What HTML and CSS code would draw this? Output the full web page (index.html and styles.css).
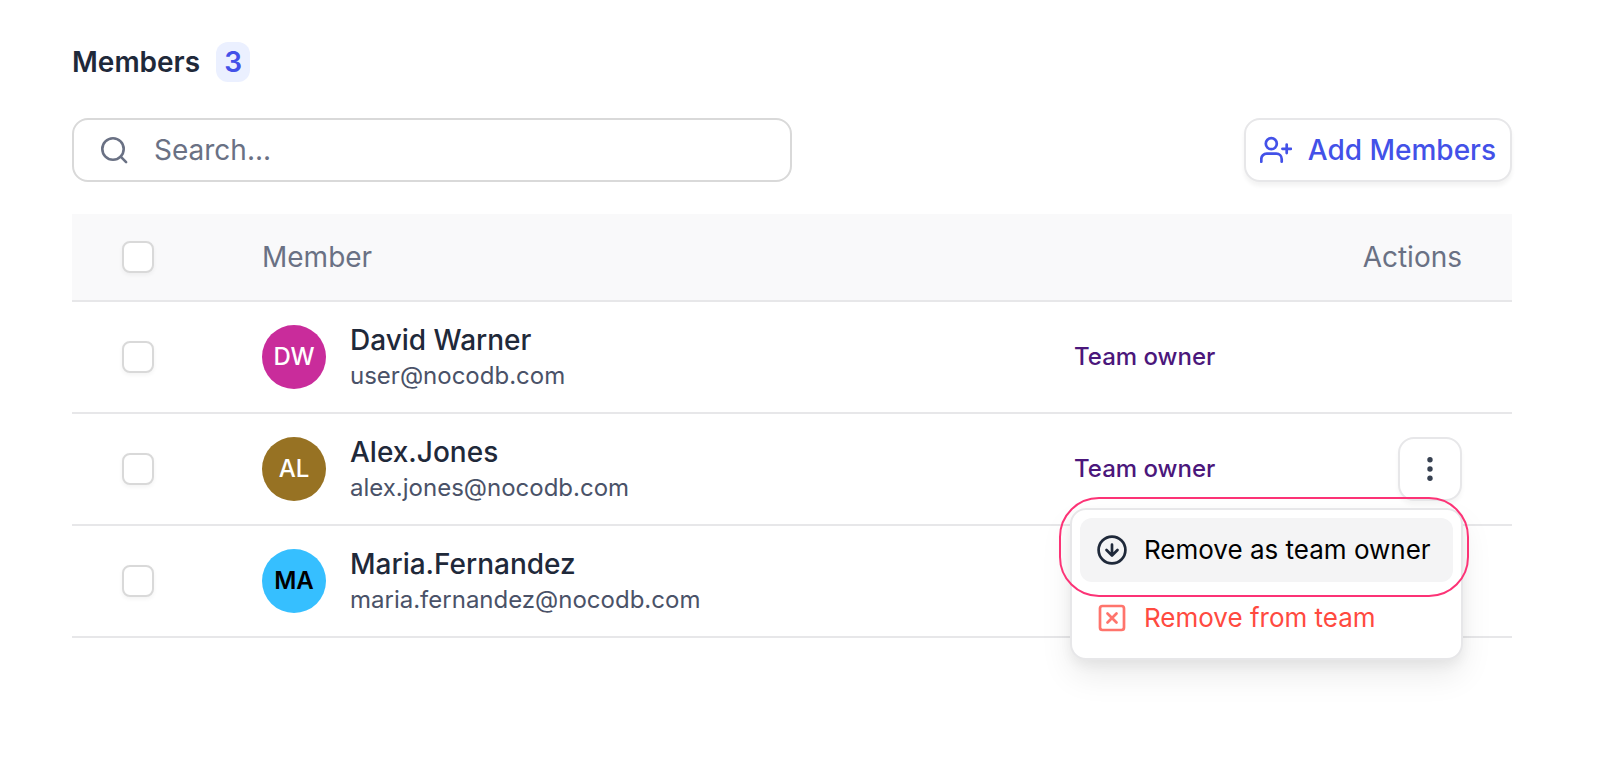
FILE: index.html
```html
<!DOCTYPE html>
<html lang="en">
<head>
<meta charset="utf-8">
<title>Members</title>
<link rel="stylesheet" href="styles.css">
</head>
<body>
<main class="page">
  <header class="heading">
    <h1 class="title">Members</h1>
    <span class="count">3</span>
  </header>

  <div class="toolbar">
    <label class="search">
      <svg class="search-icon" viewBox="0 0 32 32" aria-hidden="true"><circle cx="15" cy="15" r="10.700"/><path d="M22.700 22.700l5.400 5.400"/></svg>
      <input class="search-input" type="text" placeholder="Search..." aria-label="Search members">
    </label>
    <button class="add-button" type="button">
      <svg class="add-icon" viewBox="0 0 32 32" aria-hidden="true"><circle cx="11.300" cy="9.700" r="5.500"/><path d="M1.300 27.700v-2.700a5.400 5.400 0 0 1 5.400-5.400h9.600a5.400 5.400 0 0 1 5.400 5.400v2.700M26.700 10.500v8.600M22.400 14.800h8.600"/></svg>
      Add Members
    </button>
  </div>

  <table class="members">
    <thead>
      <tr>
        <th class="col-check"><input class="check" type="checkbox" aria-label="Select all members"></th>
        <th class="col-member">Member</th>
        <th class="col-role"></th>
        <th class="col-actions">Actions</th>
      </tr>
    </thead>
    <tbody>
      <tr>
        <td class="col-check"><input class="check" type="checkbox" aria-label="Select David Warner"></td>
        <td>
          <div class="person">
            <span class="avatar avatar-magenta">DW</span>
            <div class="person-text"><span class="name">David Warner</span><span class="email">user@nocodb.com</span></div>
          </div>
        </td>
        <td class="role">Team owner</td>
        <td class="col-actions"></td>
      </tr>
      <tr>
        <td class="col-check"><input class="check" type="checkbox" aria-label="Select Alex.Jones"></td>
        <td>
          <div class="person">
            <span class="avatar avatar-brown">AL</span>
            <div class="person-text"><span class="name">Alex.Jones</span><span class="email">alex.jones@nocodb.com</span></div>
          </div>
        </td>
        <td class="role">Team owner</td>
        <td class="col-actions">
          <div class="action-wrap">
            <button class="more-button" type="button" aria-label="Actions for Alex.Jones">
              <svg class="more-icon" viewBox="0 0 32 32" aria-hidden="true"><circle cx="16" cy="6.700" r="2.700"/><circle cx="16" cy="16" r="2.700"/><circle cx="16" cy="25.300" r="2.700"/></svg>
            </button>
            <div class="menu">
              <button class="menu-item menu-item-active" type="button">
                <svg class="menu-icon" viewBox="0 0 32 32" aria-hidden="true"><circle cx="16" cy="16" r="13.400"/><path d="M16 10.700v10.600M10.500 16l5.500 5.500 5.500-5.500"/></svg>
                Remove as team owner
              </button>
              <button class="menu-item menu-item-danger" type="button">
                <svg class="menu-icon" viewBox="0 0 32 32" aria-hidden="true"><rect x="4" y="4" width="24" height="24" rx="2.500"/><path d="M11.500 11.500l9 9M20.500 11.500l-9 9"/></svg>
                Remove from team
              </button>
              <div class="highlight"></div>
            </div>
          </div>
        </td>
      </tr>
      <tr>
        <td class="col-check"><input class="check" type="checkbox" aria-label="Select Maria.Fernandez"></td>
        <td>
          <div class="person">
            <span class="avatar avatar-blue">MA</span>
            <div class="person-text"><span class="name">Maria.Fernandez</span><span class="email">maria.fernandez@nocodb.com</span></div>
          </div>
        </td>
        <td class="role"></td>
        <td class="col-actions"></td>
      </tr>
    </tbody>
  </table>
</main>
</body>
</html>
```

FILE: styles.css
```css
* {
  box-sizing: border-box;
}

body {
  margin: 0;
  min-height: 100vh;
  background: #fff;
  color: #1f293a;
  font-family: Inter, "Liberation Sans", sans-serif;
  font-size: 28px;
  line-height: 40px;
}

button,
input {
  font: inherit;
}

svg {
  fill: none;
  stroke: currentColor;
  stroke-linecap: round;
  stroke-linejoin: round;
  flex: none;
}

.page {
  padding: 42px 112px 42px 72px;
}

.heading {
  display: flex;
  align-items: center;
  gap: 16px;
}

.title {
  margin: 0;
  font-size: 28px;
  font-weight: 600;
}

.count {
  padding: 0 8px;
  border-radius: 12px;
  background: #ebf0ff;
  color: #4351e8;
  font-weight: 600;
}

.toolbar {
  display: flex;
  justify-content: space-between;
  margin: 36px 0 32px;
}

.search {
  display: flex;
  align-items: center;
  gap: 24px;
  width: 50%;
  height: 64px;
  padding: 0 24px;
  border: 2px solid #d9d9d9;
  border-radius: 16px;
  color: #6a7184;
}

.search-icon {
  width: 32px;
  height: 32px;
  stroke-width: 2.600;
}

.search-input {
  flex: 1;
  min-width: 0;
  padding: 0;
  border: 0;
  outline: 0;
  background: none;
  color: #1f293a;
}

.search-input::placeholder {
  color: #6a7184;
  opacity: 1;
}

.add-button {
  display: flex;
  align-items: center;
  gap: 16px;
  height: 64px;
  padding: 0 14px;
  border: 2px solid #e7e7e9;
  border-radius: 16px;
  background: #fff;
  box-shadow: 0 4px 4px rgba(0, 0, 0, 0.05);
  color: #4351e8;
  font-weight: 500;
  white-space: nowrap;
}

.add-icon {
  width: 32px;
  height: 32px;
  stroke-width: 2.700;
}

.members {
  width: 100%;
  border-collapse: separate;
  border-spacing: 0;
  table-layout: fixed;
}

.members th,
.members td {
  height: 112px;
  padding: 0;
  border-bottom: 2px solid #e7e7e9;
  text-align: left;
  vertical-align: middle;
}

.members th {
  height: 88px;
  background: #f9f9fa;
  color: #6a7184;
  font-weight: 400;
}

.members .col-check {
  width: 190px;
  padding-left: 50px;
}

.col-role {
  width: 238px;
}

.members .col-actions {
  width: 200px;
  padding-right: 50px;
  text-align: right;
}

.check {
  display: block;
  appearance: none;
  width: 32px;
  height: 32px;
  margin: 0;
  border: 2px solid #d9d9d9;
  border-radius: 8px;
  background: #fff;
  box-shadow: 0 2px 4px rgba(0, 0, 0, 0.05);
}

.person {
  display: flex;
  align-items: center;
  gap: 24px;
}

.avatar {
  display: flex;
  align-items: center;
  justify-content: center;
  flex: none;
  width: 64px;
  height: 64px;
  border-radius: 50%;
  color: #fff;
  font-size: 24px;
  font-weight: 500;
}

.avatar-magenta {
  background: #c92c9b;
}

.avatar-brown {
  background: #977223;
}

.avatar-blue {
  background: #36bfff;
  color: #000;
  font-weight: 600;
}

.person-text {
  display: flex;
  flex-direction: column;
  padding-top: 2px;
}

.name {
  font-weight: 500;
  line-height: 36px;
}

.email {
  color: #4a5268;
  font-size: 24px;
  line-height: 36px;
}

.members .role {
  color: #4b177b;
  font-size: 24px;
  font-weight: 500;
}

.action-wrap {
  position: relative;
  width: 64px;
  margin-left: auto;
}

.more-button {
  display: flex;
  align-items: center;
  justify-content: center;
  width: 64px;
  height: 64px;
  padding: 0;
  border: 2px solid #e7e7e9;
  border-radius: 16px;
  background: #fff;
  box-shadow: 0 4px 4px rgba(0, 0, 0, 0.04);
  color: #374151;
}

.more-icon {
  width: 32px;
  height: 32px;
  fill: currentColor;
  stroke: none;
}

.menu {
  position: absolute;
  top: 71px;
  right: -1px;
  z-index: 1;
  display: grid;
  gap: 4px;
  min-width: 393px;
  padding: 8px;
  border: 2px solid #e7e7e9;
  border-radius: 16px;
  background: #fff;
  box-shadow: 0 16px 32px rgba(0, 0, 0, 0.08), 0 6px 12px rgba(0, 0, 0, 0.05);
}

.menu-item {
  display: flex;
  align-items: center;
  gap: 16px;
  height: 64px;
  padding: 0 16px;
  border: 0;
  border-radius: 12px;
  background: none;
  font-size: 26px;
  white-space: nowrap;
}

.menu-item-active {
  background: #f4f4f5;
  color: #000;
}

.menu-item-danger {
  color: #ff4a3f;
}

.menu-icon {
  width: 32px;
  height: 32px;
  stroke-width: 2.700;
}

.menu-item-active .menu-icon {
  color: #1f293a;
}

.menu-item-danger .menu-icon {
  color: #ff746c;
}

.highlight {
  position: absolute;
  top: -13px;
  right: -8px;
  left: -13px;
  height: 100px;
  border: 2px solid #fc3376;
  border-radius: 40px;
  pointer-events: none;
}
```
